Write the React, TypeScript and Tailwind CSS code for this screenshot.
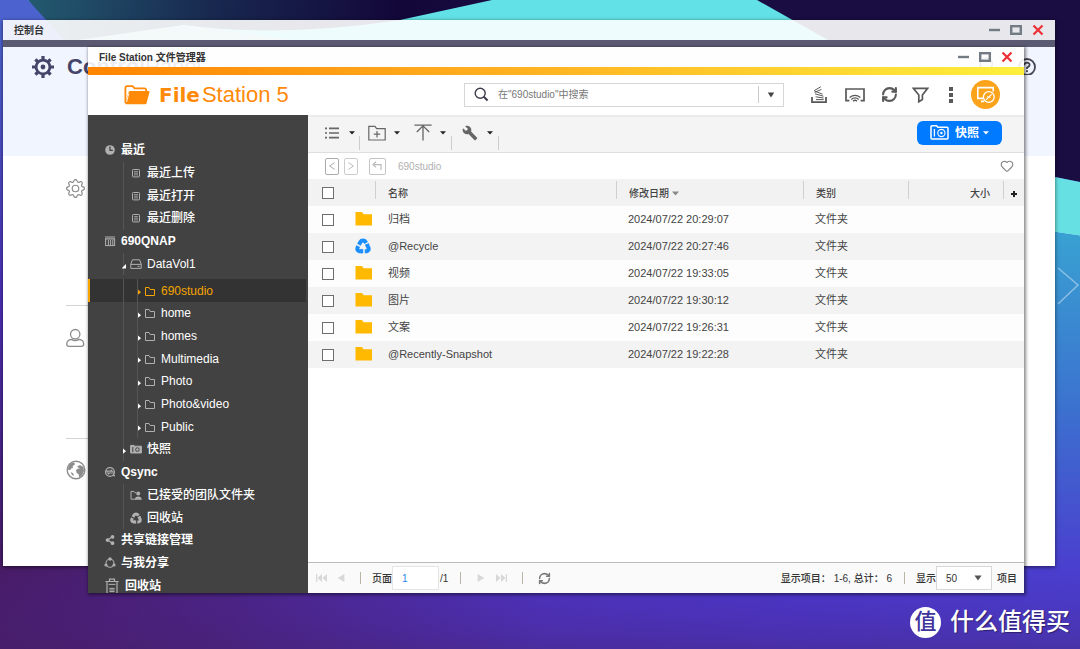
import React from "react";
import { RefreshCw, Search, Heart } from "lucide-react";
import { MdBuild } from "react-icons/md";
import { FaShareAlt } from "react-icons/fa";
import { BsGear } from "react-icons/bs";

function Wallpaper() {
  return (
    <svg className="absolute inset-0 size-full" viewBox="0 0 1080 649" preserveAspectRatio="none" aria-hidden="true">
      <defs>
        <linearGradient id="base" x1="0" y1="0" x2="1" y2="0">
          <stop offset="0" stopColor="#481c66" />
          <stop offset="0.2" stopColor="#4b2380" />
          <stop offset="0.5" stopColor="#4d34bd" />
          <stop offset="0.75" stopColor="#4b38cb" />
          <stop offset="1" stopColor="#4a3fce" />
        </linearGradient>
        <linearGradient id="fade" x1="0" y1="0" x2="0" y2="1">
          <stop offset="0" stopColor="#4a20a0" stopOpacity="0" />
          <stop offset="1" stopColor="#45206e" stopOpacity="0.4" />
        </linearGradient>
        <linearGradient id="left" x1="0" y1="0" x2="0" y2="1">
          <stop offset="0" stopColor="#4c63cf" />
          <stop offset="0.5" stopColor="#4c2fb8" />
          <stop offset="1" stopColor="#481c66" />
        </linearGradient>
        <linearGradient id="night" x1="0" y1="0" x2="1" y2="0">
          <stop offset="0" stopColor="#235a70" />
          <stop offset="0.4" stopColor="#18284f" />
          <stop offset="0.8" stopColor="#130739" />
          <stop offset="1" stopColor="#170b40" />
        </linearGradient>
        <linearGradient id="right" x1="0" y1="0" x2="0" y2="1">
          <stop offset="0" stopColor="#39a2d2" />
          <stop offset="0.5" stopColor="#3b74cf" />
          <stop offset="1" stopColor="#4a3fce" />
        </linearGradient>
      </defs>
      <rect width="1080" height="649" fill="url(#base)" />
      <rect y="570" width="1080" height="79" fill="url(#fade)" />
      <path d="M0 0H1080V42H0Z" fill="#62e1e6" />
      <path d="M28 0H492L400 20Q280 38 183 25L120 42H60Z" fill="url(#night)" />
      <path d="M64 42L183 25Q260 34 300 42Z" fill="#8fcbd0" />
      <path d="M0 0H28L66 42H0Z" fill="#4c63cf" />
      <rect y="40" width="20" height="526" fill="url(#left)" />
      <path d="M757 0H1080V182L1040 174V120L828 40Z" fill="#1a0d42" />
      <path d="M1040 174L1080 182V236L1040 230Z" fill="#66e0e3" />
      <path d="M1040 230L1080 236V567H1040Z" fill="url(#right)" />
      <path d="M1058 268L1078 285L1058 304" fill="none" stroke="#fff" strokeOpacity="0.4" strokeWidth="1.6" />
    </svg>
  );
}

function WindowButtons() {
  return (
    <div className="flex items-center gap-[10px]">
      <button aria-label="最小化" className="flex size-3 items-center justify-center">
        <svg viewBox="0 0 12 12" className="size-3"><path d="M1 6H12" stroke="#737c85" strokeWidth="2.4" /></svg>
      </button>
      <button aria-label="最大化" className="flex size-3 items-center justify-center">
        <svg viewBox="0 0 12 12" className="size-3"><rect x="1.2" y="2.2" width="9.6" height="7.6" fill="none" stroke="#737c85" strokeWidth="2.4" /></svg>
      </button>
      <button aria-label="关闭" className="flex size-3 items-center justify-center">
        <svg viewBox="0 0 12 12" className="size-3"><path d="M1.5 1.5L10.5 10.5M10.5 1.5L1.5 10.5" stroke="#ee2f35" strokeWidth="2.2" /></svg>
      </button>
    </div>
  );
}

function BoldGear() {
  return (
    <svg viewBox="0 0 24 24" className="size-6 text-[#45456a]" fill="none" stroke="currentColor" aria-hidden="true">
      <circle cx="12" cy="12" r="6.9" strokeWidth="2.8" />
      <circle cx="12" cy="12" r="2.4" fill="currentColor" stroke="none" />
      <path strokeWidth="3.2" d="M12 1V5M12 19V23M1 12H5M19 12H23M4.4 4.4L7 7M17 17L19.6 19.6M19.6 4.4L17 7M7 17L4.4 19.6" />
    </svg>
  );
}

function RecycleMark({ className }: { className: string }) {
  return (
    <svg viewBox="0 0 16 16" className={className} fill="none" stroke="currentColor" aria-hidden="true">
      <path
        d="M3.6 7.4L5.4 4Q6.2 2.6 8 2.6Q9.8 2.6 10.6 4L13.4 9.4Q14.4 12.6 11.6 13.2H4.4Q1.6 12.6 2.6 9.4Z"
        pathLength={90}
        strokeDasharray="26 4"
        strokeDashoffset="-2"
        strokeWidth="4"
      />
      <path d="M10 6.6L14.2 5.2L13.8 8.6ZM6.8 10.4V15.8L3.6 13.2Z" fill="currentColor" stroke="none" />
    </svg>
  );
}

function ControlPanelWindow() {
  return (
    <section className="absolute top-5 right-[25px] bottom-[83px] left-[3px] flex flex-col shadow-[0_1px_4px_rgba(0,0,0,0.6)]">
      <header className="flex h-5 items-center justify-between bg-white/90 pr-[11px] pl-[11px]">
        <h2 className="text-[10px] font-bold text-[#333]">控制台</h2>
        <WindowButtons />
      </header>
      <div className="h-[7px] bg-[#5a5b72]" />
      <div className="flex h-[109px] items-start justify-between bg-[#f1f5ff] pt-2 pr-[19px] pl-7">
        <div className="flex items-center gap-3">
          <BoldGear />
          <p className="text-[22px] leading-6 text-[#45456a]"><b>Control</b>Panel</p>
        </div>
        <div className="flex items-center gap-5">
          <Search className="size-[18px] text-[#45454f]" />
          <svg viewBox="0 0 20 20" className="size-5" fill="none" stroke="#45454f" strokeWidth="1.8" aria-hidden="true">
            <circle cx="11" cy="12" r="8" />
            <path d="M8.2 10.2Q8.4 7.6 11 7.6Q13.8 7.8 13.6 10Q13.4 11.4 11 12.8V14M11 15.2V17" />
          </svg>
        </div>
      </div>
      <div className="flex-1 overflow-hidden bg-white pr-16 pl-[63px] text-[#8c8c8c]">
        <div className="h-[149px] pt-[23px]"><BsGear className="size-[19px]" /></div>
        <div className="h-[133px] border-t border-[#d4d4d4] pt-[22px]">
          <svg viewBox="0 0 20 20" className="size-5" fill="none" stroke="currentColor" strokeWidth="1.3" aria-hidden="true">
            <circle cx="9.2" cy="6.2" r="4.7" />
            <path d="M5.4 11.4C2.4 11.8 .8 13.6 .8 16.2C.8 17.8 1.6 18.3 3 18.3H15.4C17 18.3 17.7 17.8 17.7 16.2C17.7 13.6 16 11.8 13 11.4Q9.2 13.6 5.4 11.4Z" />
          </svg>
        </div>
        <div className="border-t border-[#d4d4d4] pt-[21px]">
          <svg viewBox="0 0 20 20" className="size-5" aria-hidden="true">
            <circle cx="10" cy="10" r="8.8" fill="none" stroke="currentColor" strokeWidth="1.4" />
            <path fill="currentColor" d="M2 8L4 4L7 2.5L9 3.4L8.4 5L6.6 6L7 8L5 8.6L4.4 10L2.4 10Z M11 6.4L14 5L15.6 6L17.6 7L18 11L15.8 15.8L13 17.4L12.8 14.6L10.6 12.8L10 10L12 8.4L14 8.8Z M4.6 12L7.4 13.4L7.6 16L6 15Z" />
          </svg>
        </div>
      </div>
    </section>
  );
}

type IconName = "clock" | "doc" | "nas" | "drive" | "folder" | "snap" | "sync" | "team" | "recycle" | "share" | "shared" | "trash";

function TreeIcon({ name }: { name: IconName }) {
  const line = "size-3 fill-none stroke-current";
  switch (name) {
    case "clock":
      return <svg viewBox="0 0 12 12" className={line}><circle cx="6" cy="6" r="4.8" fill="currentColor" stroke="none" /><path d="M6 2.6V6.3H8.8" stroke="#424242" strokeWidth="1.3" /></svg>;
    case "doc":
      return <svg viewBox="0 0 12 12" className={line}><rect x="2.5" y="2.5" width="7" height="7.4" rx=".8" /><path d="M4 4.6H8M4 6.2H8M4 7.9H8" strokeWidth=".8" /></svg>;
    case "nas":
      return <svg viewBox="0 0 12 12" className={line}><path d="M1 2H11M1 3.8H11" strokeWidth="1.2" /><path d="M1.6 4V11M4.4 5V10.4M6.6 5V10.4M8.8 5V10.4M10.6 4V11M1.6 10.6H10.6" /></svg>;
    case "drive":
      return <svg viewBox="0 0 12 12" className={line}><path d="M.8 6.2L2.4 1.8H9.6L11.2 6.2V10.4H.8ZM.8 6.4H11.2M7.6 8.4H9.6" /></svg>;
    case "folder":
      return <svg viewBox="0 0 12 12" className={line}><path d="M1.5 2.5H5L6.2 4.5H10.5V10.5H1.5Z" /></svg>;
    case "snap":
      return <svg viewBox="0 0 12 12" className={line}><path d="M.6 2.4H4L4.6 3.2H11.4V10H.6Z" fill="currentColor" /><path d="M2.8 4V9.2" stroke="#424242" /><circle cx="7.4" cy="6.6" r="1.8" stroke="#424242" /></svg>;
    case "sync":
      return <svg viewBox="0 0 12 12" className={line}><circle cx="6" cy="6" r="4.4" strokeWidth="1.3" /><path d="M2 5.2H8.4L7 3.8M10 7H3.8L5.2 8.4M9 9.6H11" strokeWidth="1.2" /></svg>;
    case "team":
      return <svg viewBox="0 0 12 12" className={line}><path d="M5.4 10.2H1V2.4H4L5 3.8H6" /><circle cx="8.2" cy="4.6" r="2" fill="currentColor" stroke="none" /><path d="M4.8 10.8Q5 7.4 8.2 7.4Q11.6 7.4 11.8 10.8Z" fill="currentColor" stroke="none" /></svg>;
    case "recycle":
      return <RecycleMark className="size-3" />;
    case "share":
      return <FaShareAlt className="size-[10px]" />;
    case "shared":
      return <svg viewBox="0 0 12 12" className={line}><circle cx="6" cy="6.2" r="4" strokeWidth="1.1" /><g fill="currentColor" stroke="none"><circle cx="6" cy="2" r="1.7" /><circle cx="2" cy="8" r="1.6" /><circle cx="10" cy="8" r="1.6" /></g></svg>;
    case "trash":
      return <svg viewBox="0 0 14 16" className="h-4 w-[14px] fill-none stroke-current"><path d="M.5 3.5H13.5M4.5 3V1.2H9.5V3M2 3.5V15.5H12V3.5" strokeWidth="1.2" /><path d="M3.6 6.4H10.4M4.4 10.4H9.6M4.4 12H9.6M4.4 13.6H9.6" /></svg>;
  }
}

type Node = { label: string; icon: IconName; level: 0 | 1 | 2; arrow?: "open" | "closed"; selected?: boolean };

const tree: Node[] = [
  { label: "最近", icon: "clock", level: 0 },
  { label: "最近上传", icon: "doc", level: 1 },
  { label: "最近打开", icon: "doc", level: 1 },
  { label: "最近删除", icon: "doc", level: 1 },
  { label: "690QNAP", icon: "nas", level: 0 },
  { label: "DataVol1", icon: "drive", level: 1, arrow: "open" },
  { label: "690studio", icon: "folder", level: 2, arrow: "closed", selected: true },
  { label: "home", icon: "folder", level: 2, arrow: "closed" },
  { label: "homes", icon: "folder", level: 2, arrow: "closed" },
  { label: "Multimedia", icon: "folder", level: 2, arrow: "closed" },
  { label: "Photo", icon: "folder", level: 2, arrow: "closed" },
  { label: "Photo&video", icon: "folder", level: 2, arrow: "closed" },
  { label: "Public", icon: "folder", level: 2, arrow: "closed" },
  { label: "快照", icon: "snap", level: 1, arrow: "closed" },
  { label: "Qsync", icon: "sync", level: 0 },
  { label: "已接受的团队文件夹", icon: "team", level: 1 },
  { label: "回收站", icon: "recycle", level: 1 },
  { label: "共享链接管理", icon: "share", level: 0 },
  { label: "与我分享", icon: "shared", level: 0 },
  { label: "回收站", icon: "trash", level: 0 },
];

function Arrow({ kind }: { kind?: "open" | "closed" }) {
  if (!kind) return null;
  return (
    <svg viewBox="0 0 6 8" className="absolute top-[9px] left-0 h-2 w-[6px] fill-current" aria-hidden="true">
      {kind === "open" ? <path d="M4 2V6.4H-.4Z" /> : <path d="M1 1.6L4 4.2L1 6.8Z" />}
    </svg>
  );
}

function TreeRow({ node }: { node: Node }) {
  const tone = node.selected ? "mt-1 mr-[2px] bg-[#333] text-[#f5a400]" : "text-white";
  const iconTone = node.selected ? "text-[#f5a400]" : "text-[#b0b0b0]";
  return (
    <li className={`relative flex min-h-[22px] flex-1 ${tone}`}>
      {node.selected && <span className="absolute inset-y-0 left-0 w-[2px] bg-[#f5a400]" />}
      <a
        href="#"
        className={`flex flex-1 items-center text-xs leading-none ${node.level === 0 ? "pl-4 font-bold" : "pl-[35px]"} ${node.level === 1 && node.icon !== "drive" ? "font-medium" : ""}`}
      >
        {node.level > 0 && (
          <span className="relative w-px self-stretch bg-[#555]">
            {node.level === 1 && <span className="absolute inset-0 -left-px"><Arrow kind={node.arrow} /></span>}
          </span>
        )}
        {node.level === 2 && (
          <span className="relative ml-[13px] w-px self-stretch bg-[#555]">
            <Arrow kind={node.arrow} />
          </span>
        )}
        <span className={`mr-[5px] flex shrink-0 justify-center ${iconTone} ${node.icon === "trash" ? "w-4" : "w-3"} ${node.level === 0 ? "" : "ml-[6px]"}`}>
          <TreeIcon name={node.icon} />
        </span>
        {node.label}
      </a>
    </li>
  );
}

const Caret = ({ className = "text-[#222]" }: { className?: string }) => (
  <svg viewBox="0 0 6 4" className={`h-1 w-[6px] fill-current ${className}`} aria-hidden="true"><path d="M0 .3H6L3 3.6Z" /></svg>
);

function FolderIcon() {
  return (
    <svg viewBox="0 0 17 14" className="h-[14px] w-[17px]" aria-hidden="true"><path d="M.5 0H7L8.6 2.2H17V13.6H.5Z" fill="#ffb900" /></svg>
  );
}

function Header() {
  const tool = "flex h-8 items-center justify-center text-[#595959]";
  return (
    <div className="flex h-10 items-center bg-white pr-6 pb-px pl-9">
      <div className="flex flex-1 items-center">
        <svg viewBox="0 0 26 20" className="mr-[9px] h-5 w-[26px]" aria-hidden="true">
          <path d="M1.4 18V3Q1.4 1.2 3.2 1.2H8.6L10.6 3.4H20.4Q22.2 3.4 22.2 5.2V6" fill="none" stroke="#ff8a0a" strokeWidth="1.8" />
          <path d="M4.6 7.2Q5 6 6.4 6H24.4Q25.8 6 25.4 7.4L22.6 18Q22.2 19.2 21 19.2H2Q1 19 1.4 17.8Z" fill="#ff8a0a" />
          <path d="M4.8 8.4L2.6 17" stroke="#fff" strokeWidth=".9" />
        </svg>
        <h1 className="flex items-baseline gap-[2px] leading-6 text-[#ff8a0a]">
          <span className="font-['DejaVu_Sans'] text-[20px] font-bold">File</span>
          <span className="text-[22px]">Station 5</span>
        </h1>
      </div>
      <form className="flex h-6 w-80 items-center border border-[#d6d6d6] bg-white pl-[9px]" onSubmit={(e) => e.preventDefault()}>
        <svg viewBox="0 0 15 15" className="size-[15px]" fill="none" stroke="#3c3c4c" aria-hidden="true">
          <circle cx="6.2" cy="6.2" r="5" strokeWidth="1.4" /><path d="M9.8 9.8L13.6 13.4" strokeWidth="2" />
        </svg>
        <input aria-label="搜索" placeholder={'在"690studio"中搜索'} className="ml-[9px] min-w-0 flex-1 text-[10px] outline-none placeholder:text-[#777]" />
        <button type="button" aria-label="搜索选项" className="flex h-[17px] w-[25px] items-center justify-center border-l border-[#ccc]">
          <svg viewBox="0 0 8 6" className="h-[6px] w-2" fill="#444"><path d="M.8 .4H7.2L4 5.4Z" /></svg>
        </button>
      </form>
      <button aria-label="后台任务" className={`${tool} ml-[17px] w-9`}>
        <svg viewBox="0 0 16 18" className="h-[18px] w-4" fill="none" stroke="currentColor">
          <path d="M1 11V16.2H15V11" strokeWidth="1.8" />
          <path d="M5 13.6H12.6M4.6 10.8L12.6 12M4 7.8L12.4 10.2M3.4 5L11.6 8.2M3.2 4.6L9.8 .8M3.6 6.4L10.4 3.4" strokeWidth="1" />
        </svg>
      </button>
      <button aria-label="媒体播放" className={`${tool} w-9`}>
        <svg viewBox="0 0 20 16" className="h-4 w-5" fill="none" stroke="currentColor">
          <path d="M4.4 13.6H1V2H19V13.6H15.6" strokeWidth="1.7" />
          <path d="M4.6 10.6Q10 6.2 15.4 10.6M6.2 12.4Q10 9.4 13.8 12.4M8 14.2Q10 12.4 12 14.2" strokeWidth="1.3" />
        </svg>
      </button>
      <button aria-label="刷新" className={`${tool} w-8`}><RefreshCw className="size-[17px]" strokeWidth={3} /></button>
      <button aria-label="筛选" className={`${tool} w-[30px]`}>
        <svg viewBox="0 0 17 16" className="h-4 w-[17px]" fill="none" stroke="currentColor" strokeWidth="1.7"><path d="M1.4 1.4H15.6L10.4 8V12.6L6.8 14.8V8Z" /></svg>
      </button>
      <button aria-label="更多" className={`${tool} w-8`}>
        <svg viewBox="0 0 4 18" className="h-[18px] w-1 fill-current"><path d="M0 1H4V5H0ZM0 7H4V11H0ZM0 13H4V17H0Z" /></svg>
      </button>
      <button aria-label="远程连接" className="ml-1 flex size-[29px] items-center justify-center rounded-full bg-[#fba31a]">
        <svg viewBox="0 0 20 20" className="size-5" fill="none" stroke="#fff" strokeWidth="1.6">
          <path d="M7.4 13.4H1.8V2.6H17.2V6.4M5 16.4H8" />
          <circle cx="12.8" cy="12" r="5.4" strokeWidth="1.3" />
          <path d="M10 14.8L12.4 12.4L11.6 11M15.6 9.4L13.4 11.6L14.2 13" strokeWidth="1.2" />
        </svg>
      </button>
    </div>
  );
}

function Toolbar() {
  const btn = "flex h-5 items-center justify-between text-[#666]";
  const sep = "mt-5 h-[14px] w-px bg-[#ccc]";
  return (
    <div className="flex h-[38px] items-center border-t-2 border-b border-t-[#ebebeb] border-b-[#dedede] bg-[#f4f4f4] pr-[22px] pb-1 pl-4">
      <button aria-label="视图" className={`${btn} w-[31px]`}>
        <svg viewBox="0 0 16 12" className="h-3 w-4" stroke="currentColor" strokeWidth="1.7"><path d="M1 1.4H3M1 6H3M1 10.6H3M5 1.4H15M5 6H15M5 10.6H15" /></svg>
        <Caret />
      </button>
      <span className={`${sep} ml-1`} />
      <button aria-label="新建文件夹" className={`${btn} ml-2 w-8`}>
        <svg viewBox="0 0 18 16" className="h-4 w-[18px]" fill="none" stroke="currentColor" strokeWidth="1.2"><path d="M.8 1.4H7L8.6 3.6H17.2V15H.8ZM9 6V12.4M5.8 9.2H12.2" /></svg>
        <Caret />
      </button>
      <button aria-label="上传" className={`${btn} ml-[14px] w-8`}>
        <svg viewBox="0 0 18 17" className="h-[17px] w-[18px]" fill="none" stroke="currentColor" strokeWidth="1.3"><path d="M.4 1.2H17.6M9 2V16.6M2.8 8L9 1.8L15.2 8" /></svg>
        <Caret />
      </button>
      <span className={`${sep} ml-[5px]`} />
      <button aria-label="工具" className={`${btn} ml-[10px] w-[31px]`}>
        <MdBuild className="size-4" />
        <Caret />
      </button>
      <span className={`${sep} ml-[5px]`} />
      <button className="ml-auto flex h-6 w-[85px] items-center justify-center rounded-md bg-[#007aff] text-xs font-bold text-white">
        <svg viewBox="0 0 19 15" className="mr-[6px] h-[15px] w-[19px]" fill="none" stroke="#fff" strokeWidth="1.3" aria-hidden="true">
          <path d="M1 1.8Q1 .8 2 .8H6.6L7.8 2.2H17Q18 2.2 18 3.2V13Q18 14 17 14H2Q1 14 1 13Z" strokeWidth="1.5" />
          <path d="M4.4 4V11.6" /><circle cx="11.4" cy="8" r="3.6" strokeWidth="1.1" /><circle cx="11.4" cy="8" r="1.2" fill="#fff" stroke="none" />
        </svg>
        快照
        <Caret className="ml-1 text-white" />
      </button>
    </div>
  );
}

function PathBar() {
  const box = "flex h-[17px] items-center justify-center rounded-[2px] border";
  return (
    <div className="flex h-[26px] items-center bg-white pr-[10px] pl-[17px]">
      <button aria-label="后退" className={`${box} w-[14px] border-[#aaa] text-[#aaa]`}>
        <svg viewBox="0 0 8 8" className="size-2" fill="none" stroke="currentColor"><path d="M6.6 .6L1.6 4L6.6 7.4" /></svg>
      </button>
      <button aria-label="前进" className={`${box} ml-[5px] w-[14px] border-[#ccc] text-[#bbb]`}>
        <svg viewBox="0 0 8 8" className="size-2" fill="none" stroke="currentColor"><path d="M1.4 .6L6.4 4L1.4 7.4" /></svg>
      </button>
      <button aria-label="上一级" className={`${box} ml-[11px] w-[17px] border-[#c4c4c4] text-[#bbb]`}>
        <svg viewBox="0 0 11 10" className="h-[10px] w-[11px]" fill="none" stroke="currentColor" strokeWidth="1.2"><path d="M4 .8L1 3.6L4 6.4M1.2 3.6H9V9" /></svg>
      </button>
      <span className="ml-3 text-[10px] text-[#b0b0b0]">690studio</span>
      <button aria-label="收藏" className="ml-auto text-[#888]"><Heart className="size-[14px]" strokeWidth={2} /></button>
    </div>
  );
}

const rows = [
  { name: "归档", date: "2024/07/22 20:29:07" },
  { name: "@Recycle", date: "2024/07/22 20:27:46", recycle: true },
  { name: "视频", date: "2024/07/22 19:33:05" },
  { name: "图片", date: "2024/07/22 19:30:12" },
  { name: "文案", date: "2024/07/22 19:26:31" },
  { name: "@Recently-Snapshot", date: "2024/07/22 19:22:28" },
];

const checkbox = "ml-[14px] block size-3 appearance-none border border-[#6e6e6e] bg-white checked:bg-[#007aff]";

function HeadCell({ children, className = "pl-3 text-left" }: { children?: React.ReactNode; className?: string }) {
  return (
    <th className="p-0 align-top font-medium">
      <div className="mt-[2px] h-[18px] border-l border-[#d0d0d0]">
        <div className={`flex h-[25px] items-center gap-[3px] ${className}`}>{children}</div>
      </div>
    </th>
  );
}

function FileTable() {
  return (
    <table className="w-full table-fixed border-collapse text-[11px] text-[#444]">
      <colgroup>
        <col className="w-[40px]" /><col className="w-[27px]" /><col /><col className="w-[187px]" />
        <col className="w-[105px]" /><col className="w-[95px]" /><col className="w-[21px]" />
      </colgroup>
      <thead className="bg-[#f2f2f2] text-[10px]">
        <tr className="h-[27px]">
          <th className="p-0"><input type="checkbox" aria-label="全选" className={checkbox} /></th>
          <th className="p-0" aria-label="图标" />
          <HeadCell>名称</HeadCell>
          <HeadCell>
            修改日期
            <svg viewBox="0 0 7 5" className="h-[5px] w-[7px] fill-[#888]" aria-hidden="true"><path d="M0 .6H7L3.5 4.6Z" /></svg>
          </HeadCell>
          <HeadCell>类别</HeadCell>
          <HeadCell className="justify-end pr-[13px]">大小</HeadCell>
          <HeadCell className="justify-center">
            <button aria-label="添加列">
              <svg viewBox="0 0 6 6" className="size-[6px]" stroke="#222" strokeWidth="2"><path d="M3 0V6M0 3H6" /></svg>
            </button>
          </HeadCell>
        </tr>
      </thead>
      <tbody>
        {rows.map((r) => (
          <tr key={r.name} className="h-[27px] bg-[#fdfdfd] even:bg-[#f3f3f3]">
            <td className="p-0"><input type="checkbox" aria-label={r.name} className={checkbox} /></td>
            <td className="p-0">
              <span className="flex justify-center pb-[2px] pl-[3px]">{r.recycle ? <RecycleMark className="size-4 text-[#1c8fff]" /> : <FolderIcon />}</span>
            </td>
            <td className="p-0 pl-[13px]">{r.name}</td>
            <td className="p-0 pl-3">{r.date}</td>
            <td className="p-0 pl-3">文件夹</td>
            <td className="p-0" />
            <td className="p-0" />
          </tr>
        ))}
      </tbody>
    </table>
  );
}

function Footer() {
  const sep = "h-3 w-px bg-[#b9b6a8]";
  return (
    <footer className="flex h-[31px] items-center border-t border-[#bbb] bg-[#fafafa] pr-[7px] pl-2 text-[10px] font-medium text-[#333]">
      <button aria-label="首页" className="text-[#d8d8d8]"><svg viewBox="0 0 11 8" className="h-2 w-[11px] fill-current"><path d="M0 0H1.2V8H0ZM6 0V8L1.4 4ZM11 0V8L6.4 4Z" /></svg></button>
      <button aria-label="上一页" className="ml-[10px] text-[#d8d8d8]"><svg viewBox="0 0 8 8" className="size-2 fill-current"><path d="M7.4 0V8L.6 4Z" /></svg></button>
      <span className={`${sep} ml-[15px]`} />
      <label htmlFor="page" className="ml-[11px]">页面</label>
      <input id="page" defaultValue="1" className="h-6 w-[47px] border border-[#e6e6e6] bg-white pl-[9px] font-normal text-[#1f86ea] outline-none" />
      <span className="ml-px">/1</span>
      <span className={`${sep} ml-3`} />
      <button aria-label="下一页" className="ml-4 text-[#d8d8d8]"><svg viewBox="0 0 8 8" className="size-2 fill-current"><path d="M.6 0V8L7.4 4Z" /></svg></button>
      <button aria-label="末页" className="ml-[11px] text-[#d8d8d8]"><svg viewBox="0 0 11 8" className="h-2 w-[11px] fill-current"><path d="M11 0H9.8V8H11ZM5 0V8L9.6 4ZM0 0V8L4.6 4Z" /></svg></button>
      <span className={`${sep} ml-[15px]`} />
      <button aria-label="刷新列表" className="ml-[15px] text-[#777]"><RefreshCw className="size-[13px]" strokeWidth={2.8} /></button>
      <span className="ml-auto">显示项目： 1-6, 总计： 6</span>
      <span className={`${sep} mr-[11px] ml-3`} />
      <label htmlFor="size">显示</label>
      <span className="relative flex items-center">
        <select id="size" defaultValue="50" className="h-6 w-14 appearance-none border border-[#d8d8d8] bg-white pl-[9px] outline-none">
          <option>50</option>
          <option>100</option>
        </select>
        <svg viewBox="0 0 8 6" className="pointer-events-none absolute right-[10px] h-[6px] w-2" fill="#555" aria-hidden="true"><path d="M.4 .6H7.6L4 5.4Z" /></svg>
      </span>
      <span className="ml-[5px]">项目</span>
    </footer>
  );
}

function FileStationWindow() {
  return (
    <section className="absolute top-[47px] right-[56px] bottom-[56px] left-[88px] flex flex-col shadow-[1px_1px_3px_1px_rgba(0,0,0,0.45)]">
      <header className="flex h-5 items-center justify-between bg-white/90 pr-[11px] pl-[11px]">
        <h2 className="text-[10px] font-bold text-[#333]">File Station 文件管理器</h2>
        <WindowButtons />
      </header>
      <div className="h-2 bg-linear-to-r from-[#ff8400] via-[#ffb522] to-[#ffef3c]" />
      <Header />
      <div className="flex min-h-0 flex-1">
        <nav className="flex w-[220px] shrink-0 flex-col overflow-hidden bg-[#424242] pt-6">
          <ul className="-mb-1 flex flex-1 flex-col">
            {tree.map((n, i) => <TreeRow key={i} node={n} />)}
          </ul>
        </nav>
        <main className="flex min-w-0 flex-1 flex-col bg-white">
          <Toolbar />
          <PathBar />
          <div className="flex-1 overflow-hidden"><FileTable /></div>
          <Footer />
        </main>
      </div>
    </section>
  );
}

export default function App() {
  return (
    <div className="relative h-screen min-h-[600px] overflow-hidden font-['Liberation_Sans','Noto_Sans_CJK_SC',sans-serif]">
      <Wallpaper />
      <ControlPanelWindow />
      <FileStationWindow />
      <div className="absolute right-[10px] bottom-[11px] flex items-center gap-[9px] text-white">
        <span className="flex size-[31px] items-center justify-center rounded-full bg-white text-[22px] leading-none font-medium text-[#3f349c]">值</span>
        <span className="text-[24px] leading-8 font-medium text-shadow-[1px_1px_1px_rgba(0,0,0,0.4)]">什么值得买</span>
      </div>
    </div>
  );
}
